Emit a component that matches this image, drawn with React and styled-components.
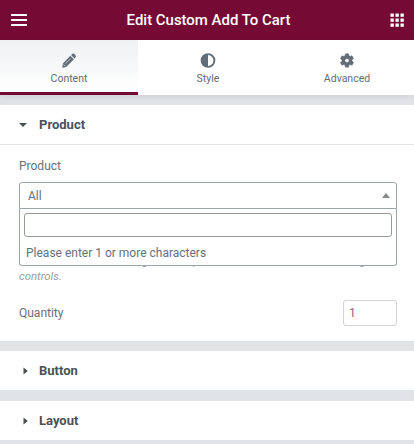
import React from 'react';
import styled, { createGlobalStyle } from 'styled-components';

const GlobalStyle = createGlobalStyle`
  * { box-sizing: border-box; }
  body { margin: 0; background: #e0e4e7; font-family: Roboto, Arial, sans-serif; color: #66717b; }
`;

const Panel = styled.div`
  width: 414px;
  height: 444px;
  overflow: hidden;
  background: #e0e4e7;
`;

const Header = styled.header`
  height: 40px;
  padding: 0 10px 0 11px;
  display: flex;
  align-items: center;
  justify-content: space-between;
  background: #750b35;
  color: #fff;
`;

const Title = styled.h1`
  margin: 0;
  font-size: 14.95px;
  font-weight: 500;
  line-height: 40px;
`;

const Tabs = styled.nav`
  display: grid;
  grid-template-columns: repeat(3, 138px);
  column-gap: 1px;
  height: 55px;
  background: #fff;
  box-shadow: 0 1px 6px rgba(0, 0, 0, 0.1);
`;

const Tab = styled.button`
  border: 0;
  border-bottom: 3px solid ${({ $active }) => ($active ? '#750b35' : 'transparent')};
  margin: 0;
  padding: 13px 0 0;
  display: flex;
  flex-direction: column;
  align-items: center;
  gap: 4px;
  background: ${({ $active }) => ($active ? 'linear-gradient(#eff1f3, #fff)' : '#fff')};
  color: #626d77;
  font: 400 10.5px/14px Roboto, sans-serif;
  svg { display: block; height: 15px; }
`;

const Section = styled.section`
  margin-top: ${({ $gap }) => $gap}px;
  background: #fff;
`;

const SectionHeading = styled.h2`
  margin: 0;
  height: ${({ $open }) => ($open ? 40 : 39)}px;
  border-bottom: ${({ $open }) => ($open ? '1px solid #e0e4e7' : '0')};
  padding-left: 18px;
  display: flex;
  align-items: center;
  gap: 11px;
  color: #495157;
  font-size: 13px;
  font-weight: 700;
  svg { flex: none; }
`;

const Controls = styled.div`
  height: 196px;
  padding: 14px 17px 0 19px;
  font-size: 12px;
`;

const Label = styled.label`
  display: block;
  font-size: 12px;
  line-height: 14px;
`;

const SelectWrap = styled.div`
  position: relative;
  margin-top: 9px;
  width: 378px;
`;

const SelectBox = styled.div`
  height: 27px;
  padding: 0 6px 0 8px;
  display: flex;
  align-items: center;
  justify-content: space-between;
  border: 1px solid #9da5ae;
  border-radius: 3px 3px 0 0;
`;

const Dropdown = styled.div`
  position: absolute;
  top: 27px;
  left: 0;
  width: 378px;
  height: 57px;
  padding: 4px;
  background: #fff;
  border: 1px solid #9da5ae;
  border-top: 0;
  border-radius: 0 0 3px 3px;
`;

const Search = styled.input`
  display: block;
  width: 368px;
  height: 24px;
  border: 1px solid #999;
  border-radius: 3px;
  background: #fff;
  outline: 0;
`;

const Message = styled.div`
  padding: 9px 2px 0;
  line-height: 14px;
`;

const Description = styled.p`
  margin: 45px -17px 0 0;
  color: #929ea8;
  font-size: 11.35px;
  font-style: italic;
  line-height: 15px;
`;

const QuantityRow = styled.div`
  margin-top: 16px;
  display: flex;
  align-items: center;
  justify-content: space-between;
`;

const QuantityInput = styled.input`
  width: 54px;
  height: 26px;
  padding: 0 5px;
  border: 1px solid #d0d4d9;
  border-radius: 3px;
  color: #66717b;
  font: 12px Roboto, sans-serif;
`;

const MenuIcon = () => (
  <svg width="16" height="12" viewBox="0 0 16 12" fill="#fff">
    <rect y="0" width="16" height="2" rx=".5" />
    <rect y="5" width="16" height="2" rx=".5" />
    <rect y="10" width="16" height="2" rx=".5" />
  </svg>
);

const GridIcon = () => (
  <svg width="14" height="14" viewBox="0 0 14 14" fill="#fff">
    {[0.5, 5.5, 10.5].map((y) =>
      [0.5, 5.5, 10.5].map((x) => <rect key={`${x}-${y}`} x={x} y={y} width="3.3" height="3.3" />)
    )}
  </svg>
);

const PencilIcon = () => (
  <svg width="14" height="15" viewBox="0 0 14 15" fill="currentColor">
    <path d="M8.4 2.8l3.5 3.5-7.7 7.6-3.5.8c-.3 0-.5-.2-.4-.5l.6-3.8zM9.1 2.1l1.1-1.1c.6-.6 1.4-.6 2 0l1.3 1.3c.6.6.6 1.4 0 2l-1 1.2z" />
    <path d="M3.6 10.6l5-5M1.4 11.2l2.2 2.2" fill="none" stroke="#f8f9fa" strokeWidth=".6" />
  </svg>
);

const ContrastIcon = () => (
  <svg width="16" height="15" viewBox="0 0 16 15" fill="currentColor">
    <circle cx="8" cy="7.5" r="6.4" fill="none" stroke="currentColor" strokeWidth="1.9" />
    <path d="M8 1a6.5 6.5 0 0 0 0 13z" />
  </svg>
);

const GearIcon = () => (
  <svg width="14" height="15" viewBox="2 2 20 20" fill="currentColor" stroke="currentColor" strokeWidth=".7" strokeLinejoin="round">
    <path d="M19.14 12.94c.04-.3.06-.61.06-.94 0-.32-.02-.64-.07-.94l2.03-1.58a.49.49 0 0 0 .12-.61l-1.92-3.32a.49.49 0 0 0-.59-.22l-2.39.96c-.5-.38-1.03-.7-1.62-.94l-.36-2.54a.48.48 0 0 0-.48-.41h-3.84c-.24 0-.43.17-.47.41l-.36 2.54c-.59.24-1.13.57-1.62.94l-2.39-.96c-.22-.08-.47 0-.59.22L2.74 8.87c-.12.21-.08.47.12.61l2.03 1.58c-.05.3-.09.63-.09.94s.02.64.07.94l-2.03 1.58a.49.49 0 0 0-.12.61l1.92 3.32c.12.22.37.29.59.22l2.39-.96c.5.38 1.03.7 1.62.94l.36 2.54c.05.24.24.41.48.41h3.84c.24 0 .44-.17.47-.41l.36-2.54c.59-.24 1.13-.56 1.62-.94l2.39.96c.22.08.47 0 .59-.22l1.92-3.32a.49.49 0 0 0-.12-.61zM12 15a3 3 0 1 1 0-6 3 3 0 0 1 0 6z" />
  </svg>
);

const Caret = ({ open }) => (
  <svg width="10" height="8" viewBox="0 0 10 8" fill="#495157">
    <path d={open ? 'M1 2h8L5 6z' : 'M5.5 .6v6.8L9.8 4z'} />
  </svg>
);

export default function App() {
  return (
    <>
      <GlobalStyle />
      <Panel>
        <Header>
          <MenuIcon />
          <Title>Edit Custom Add To Cart</Title>
          <GridIcon />
        </Header>
        <Tabs>
          <Tab $active><PencilIcon />Content</Tab>
          <Tab><ContrastIcon />Style</Tab>
          <Tab><GearIcon />Advanced</Tab>
        </Tabs>
        <Section $gap={10}>
          <SectionHeading $open><Caret open />Product</SectionHeading>
          <Controls>
            <Label>Product</Label>
            <SelectWrap>
              <SelectBox>
                All
                <svg width="8" height="5" viewBox="0 0 8 5" fill="#888"><path d="M0 5h8L4 0z" /></svg>
              </SelectBox>
              <Dropdown>
                <Search aria-label="Search products" />
                <Message>Please enter 1 or more characters</Message>
              </Dropdown>
            </SelectWrap>
            <Description>
              Please note that switching on this option will disable some of the design<br />
              controls.
            </Description>
            <QuantityRow>
              <Label>Quantity</Label>
              <QuantityInput defaultValue="1" aria-label="Quantity" />
            </QuantityRow>
          </Controls>
        </Section>
        <Section $gap={10}>
          <SectionHeading><Caret />Button</SectionHeading>
        </Section>
        <Section $gap={11}>
          <SectionHeading><Caret />Layout</SectionHeading>
        </Section>
      </Panel>
    </>
  );
}
